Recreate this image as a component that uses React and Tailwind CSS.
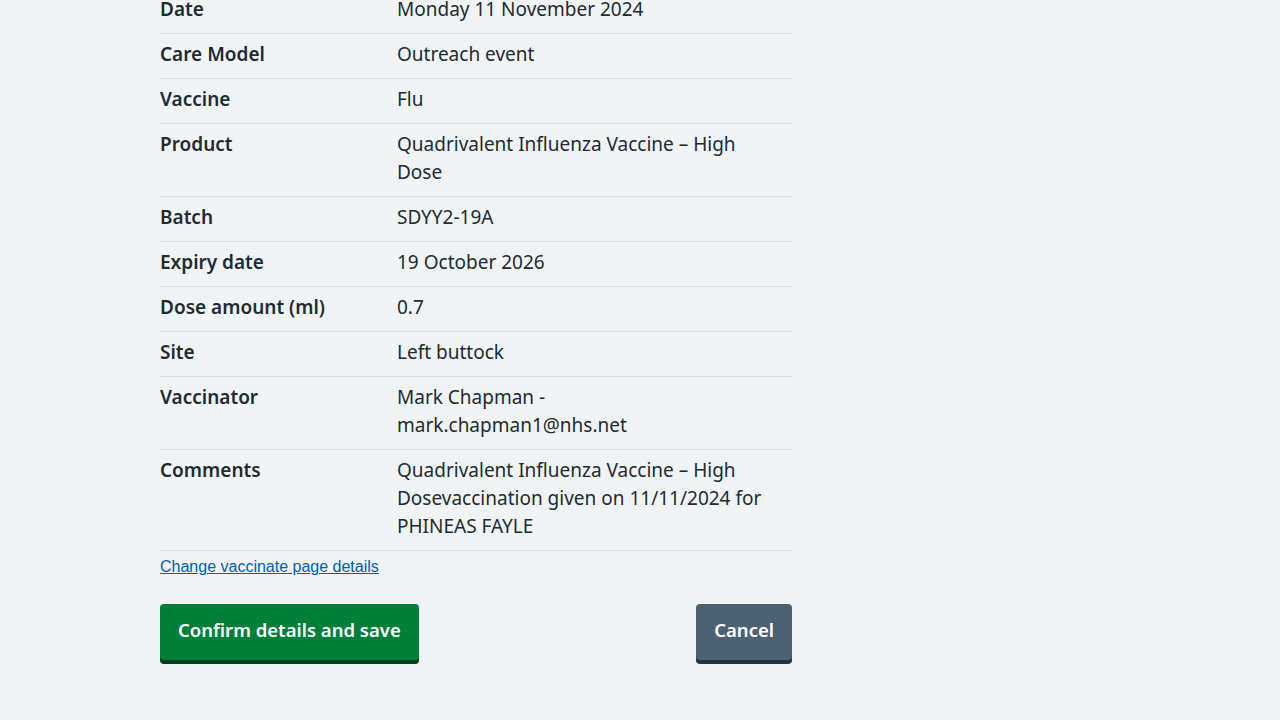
const rows = [
  { key: "Date", value: "Monday 11 November 2024" },
  { key: "Care Model", value: "Outreach event" },
  { key: "Vaccine", value: "Flu" },
  { key: "Product", value: "Quadrivalent Influenza Vaccine – High Dose" },
  { key: "Batch", value: "SDYY2-19A" },
  { key: "Expiry date", value: "19 October 2026" },
  { key: "Dose amount (ml)", value: "0.7" },
  { key: "Site", value: "Left buttock" },
  { key: "Vaccinator", value: "Mark Chapman - mark.chapman1@nhs.net" },
  {
    key: "Comments",
    value:
      "Quadrivalent Influenza Vaccine – High Dosevaccination given on 11/11/2024 for PHINEAS FAYLE",
  },
];

const App = () => {
  return (
    <div className="min-h-[720px] bg-[#f0f4f5] text-[#212b32] font-['Noto_Sans',sans-serif] overflow-hidden">
      <div className="w-[632px] ml-[160px] -mt-[11px]">
        <dl>
          {rows.map((row) => (
            <div key={row.key} className="flex border-b border-[#d8dde0]">
              <dt className="w-[237px] shrink-0 pr-6 pt-[6px] pb-[10px] text-[19px] leading-[28px] font-semibold">
                {row.key}
              </dt>
              <dd className="w-[371px] pt-[6px] pb-[10px] text-[19px] leading-[28px]">
                {row.value}
              </dd>
            </div>
          ))}
        </dl>

        <a
          href="#"
          className="block mt-[6px] text-[16px] leading-[20px] text-[#005eb8] underline font-['Liberation_Sans',Arial,sans-serif]"
        >
          Change vaccinate page details
        </a>

        <div className="flex justify-between mt-[27px]">
          <button className="h-[56px] px-[18px] pb-1 rounded-[4px] bg-[#007f3b] text-white text-[18.5px] font-semibold shadow-[0_4px_0_#00401e]">
            Confirm details and save
          </button>
          <button className="h-[56px] px-[18px] pb-1 rounded-[4px] bg-[#4c6272] text-white text-[18.5px] font-semibold shadow-[0_4px_0_#263139]">
            Cancel
          </button>
        </div>
      </div>
    </div>
  );
};

export default App;
